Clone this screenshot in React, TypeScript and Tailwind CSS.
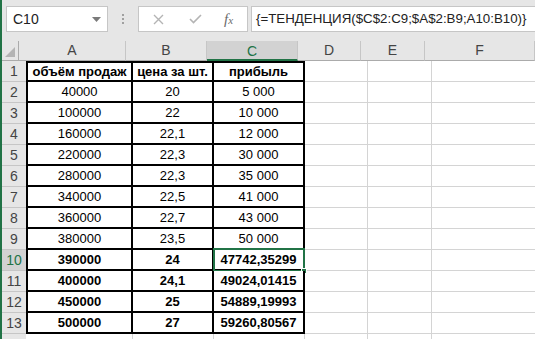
import React from 'react';

const cols = [
    { key: 'A', w: 'w-[107px]' },
    { key: 'B', w: 'w-[81px]' },
    { key: 'C', w: 'w-[91px]' },
    { key: 'D', w: 'w-[63px]' },
    { key: 'E', w: 'w-[64px]' },
    { key: 'F', w: 'w-[110px]' },
];

const rows: [string, string, string, boolean][] = [
    ['объём продаж', 'цена за шт.', 'прибыль', true],
    ['40000', '20', '5 000', false],
    ['100000', '22', '10 000', false],
    ['160000', '22,1', '12 000', false],
    ['220000', '22,3', '30 000', false],
    ['280000', '22,3', '35 000', false],
    ['340000', '22,5', '41 000', false],
    ['360000', '22,7', '43 000', false],
    ['380000', '23,5', '50 000', false],
    ['390000', '24', '47742,35299', true],
    ['400000', '24,1', '49024,01415', true],
    ['450000', '25', '54889,19993', true],
    ['500000', '27', '59260,80567', true],
];

function Toolbar() {
    return (
        <div className="flex h-[41px] shrink-0 items-start pt-[6px]">
            <div className="ml-[4px] flex h-[26px] w-[102px] items-center justify-between border border-[#c6c6c6] bg-white pl-[6px] pr-[6px]">
                <span className="text-[14px] text-[#222]">C10</span>
                <svg width="9" height="5" viewBox="0 0 9 5">
                    <path d="M0 0H9L4.5 5Z" fill="#7a7a7a" />
                </svg>
            </div>
            <div className="ml-[14px] flex h-[26px] flex-col justify-center gap-[2px]">
                <div className="h-[2px] w-[2px] bg-[#a0a0a0]" />
                <div className="h-[2px] w-[2px] bg-[#a0a0a0]" />
                <div className="h-[2px] w-[2px] bg-[#a0a0a0]" />
            </div>
            <div className="ml-[14px] flex h-[26px] w-[110px] items-center border border-[#c6c6c6] bg-white">
                <svg className="ml-[14px]" width="11" height="11" viewBox="0 0 11 11">
                    <path d="M1 1L10 10M10 1L1 10" stroke="#b4b4b4" strokeWidth="1.4" />
                </svg>
                <svg className="ml-[25px]" width="13" height="10" viewBox="0 0 13 10">
                    <path d="M1 5L4.5 8.5L12 1" stroke="#b4b4b4" strokeWidth="1.6" fill="none" />
                </svg>
                <span className="ml-[22px] font-['Liberation_Serif',serif] text-[15px] italic text-[#6b6b6b]">
                    f<span className="text-[11px]">x</span>
                </span>
            </div>
            <div className="ml-[3px] flex h-[26px] flex-1 items-center border border-r-0 border-[#c6c6c6] bg-white pl-[4px]">
                <span className="whitespace-nowrap text-[13.3px] text-[#222]">
                    {'{=ТЕНДЕНЦИЯ($C$2:C9;$A$2:B9;A10:B10)}'}
                </span>
            </div>
        </div>
    );
}

function HeaderRow() {
    return (
        <div className="flex h-[20px] shrink-0 bg-[#e6e6e6]">
            <div className="relative h-full w-[24px] border-b border-r border-[#ababab]">
                <svg className="absolute bottom-[3px] right-[3px]" width="10" height="10" viewBox="0 0 10 10">
                    <path d="M10 0V10H0Z" fill="#b4b4b4" />
                </svg>
            </div>
            {cols.map((c) =>
                c.key === 'C' ? (
                    <div
                        key={c.key}
                        className={`${c.w} flex h-full shrink-0 items-center justify-center border-b-2 border-r border-b-[#217346] border-r-[#c6c6c6] bg-[#d2d2d2] pt-[2px] text-[14px] text-[#217346]`}
                    >
                        {c.key}
                    </div>
                ) : (
                    <div
                        key={c.key}
                        className={`${c.w} flex h-full shrink-0 items-center justify-center border-b border-r border-b-[#ababab] border-r-[#c6c6c6] text-[14px] text-[#444]`}
                    >
                        {c.key}
                    </div>
                ),
            )}
        </div>
    );
}

function DataRow({ n, vals, bold }: { n: number; vals: string[]; bold: boolean }) {
    const sel = n === 10;
    const thick = 'border-b-2 border-r-2 border-black';
    const top = n === 1 ? 'border-t-2' : '';
    return (
        <div className="flex h-[21px] shrink-0">
            <div
                className={`flex h-full w-[24px] shrink-0 items-center justify-center border-b border-[#c6c6c6] text-[14px] ${
                    sel ? 'bg-[#d2d2d2] text-[#217346]' : 'bg-[#e6e6e6] text-[#444]'
                }`}
            >
                {n}
            </div>
            {vals.map((v, i) => (
                <div
                    key={i}
                    className={`${cols[i].w} relative flex h-full shrink-0 items-center justify-center bg-white text-[13px] text-black ${thick} ${top} ${
                        i === 0 ? 'border-l-2' : ''
                    } ${bold ? 'font-bold' : ''}`}
                >
                    {v}
                    {sel && i === 2 && (
                        <div className="absolute -bottom-[3px] -left-[1px] -right-[2px] -top-[2px] border-2 border-[#217346]">
                            <div className="absolute -bottom-[4px] -right-[4px] h-[6px] w-[6px] border border-white bg-[#217346]" />
                        </div>
                    )}
                </div>
            ))}
            {cols.slice(3).map((c) => (
                <div key={c.key} className={`${c.w} h-full shrink-0 border-b border-r border-[#d4d4d4] bg-white`} />
            ))}
        </div>
    );
}

function App() {
    return (
        <div className="flex h-[339px] w-[535px] overflow-hidden bg-[#e6e6e6] font-['Liberation_Sans',Arial,sans-serif]">
            <div className="h-full w-[2px] shrink-0 bg-[#217346]" />
            <div className="flex min-w-0 flex-1 flex-col">
                <Toolbar />
                <HeaderRow />
                {rows.map((r, i) => (
                    <DataRow key={i} n={i + 1} vals={[r[0], r[1], r[2]]} bold={r[3]} />
                ))}
                <div className="flex h-[21px] shrink-0">
                    <div className="h-full w-[24px] shrink-0 bg-[#e6e6e6]" />
                    {cols.map((c) => (
                        <div key={c.key} className={`${c.w} h-full shrink-0 border-r border-[#d4d4d4] bg-white`} />
                    ))}
                </div>
            </div>
        </div>
    );
}

export default App;
